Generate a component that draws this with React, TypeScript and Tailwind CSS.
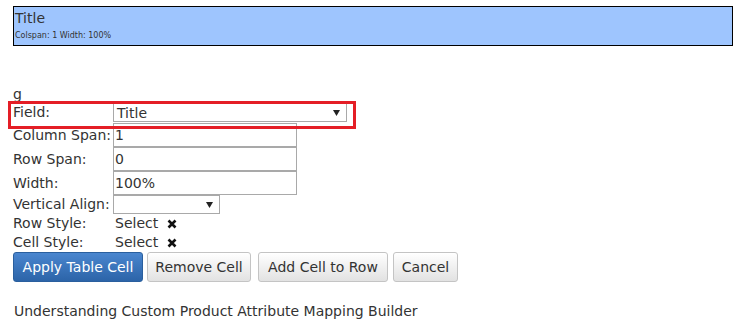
const font = { fontFamily: '"DejaVu Sans", Verdana, sans-serif' };

const Caret = () => (
  <svg width="7" height="6" viewBox="0 0 7 6" className="shrink-0">
    <path d="M0 0 L7 0 L3.5 6 Z" fill="#222" />
  </svg>
);

const Label = ({ children }: { children: React.ReactNode }) => (
  <div className="w-[100px] shrink-0 whitespace-nowrap">{children}</div>
);

const TextBox = ({ value }: { value: string }) => (
  <div className="w-[184px] h-[24px] border border-[#a9a9a9] bg-white px-[1px] flex items-center leading-none">
    {value}
  </div>
);

const XIcon = () => (
  <svg width="10" height="10" viewBox="0 0 10 10" className="ml-[9px]">
    <path d="M1.5 1.5 L8.5 8.5 M8.5 1.5 L1.5 8.5" stroke="#111" strokeWidth="2.6" strokeLinecap="butt" />
  </svg>
);

const GreyButton = ({ children, className }: { children: React.ReactNode; className: string }) => (
  <button
    className={`h-[30px] shrink-0 whitespace-nowrap rounded-[3px] border border-[#c4c4c4] bg-gradient-to-b from-white to-[#e2e2e2] text-[#333] shadow-[inset_0_1px_0_rgba(255,255,255,0.8)] ${className}`}
  >
    {children}
  </button>
);

export default function App() {
  return (
    <div className="w-[743px] h-[326px] bg-white text-[14px] text-[#333] overflow-hidden" style={font}>
      {/* cell preview */}
      <div className="ml-[13px] mt-[6px] w-[720px] h-[40px] border border-black bg-[#9ec5fe] pl-[1px]">
        <div className="text-[14px] leading-[20px] pt-[1px]">Title</div>
        <div className="text-[8px] leading-[12px] mt-[2px]">Colspan: 1 Width: 100%</div>
      </div>

      <div className="ml-[13px] mt-[40px] leading-[16px] h-[16px]">g</div>

      <div className="relative">
        {/* highlight */}
        <div className="absolute left-[8px] top-[-1px] w-[348px] h-[28px] border-[3px] border-[#e41e26] pointer-events-none" />

        <div className="pl-[13px] flex items-center h-[21px]">
          <Label>Field:</Label>
          <div className="w-[234px] h-[19px] border border-[#a9a9a9] bg-white flex items-center justify-between pl-[3px] pr-[6px] leading-none">
            <span>Title</span>
            <Caret />
          </div>
        </div>

        <div className="pl-[13px] flex items-center h-[24px]">
          <Label>Column Span:</Label>
          <TextBox value="1" />
        </div>
        <div className="pl-[13px] flex items-center h-[24px]">
          <Label>Row Span:</Label>
          <TextBox value="0" />
        </div>
        <div className="pl-[13px] flex items-center h-[24px]">
          <Label>Width:</Label>
          <TextBox value="100%" />
        </div>
        <div className="pl-[13px] flex items-center h-[19px]">
          <Label>Vertical Align:</Label>
          <div className="w-[107px] h-[19px] border border-[#a9a9a9] bg-white flex items-center justify-end pr-[6px]">
            <Caret />
          </div>
        </div>
        <div className="pl-[13px] flex items-center h-[19px]">
          <Label>Row Style:</Label>
          <span className="ml-[2px]">Select</span>
          <XIcon />
        </div>
        <div className="pl-[13px] flex items-center h-[19px]">
          <Label>Cell Style:</Label>
          <span className="ml-[2px]">Select</span>
          <XIcon />
        </div>

        <div className="pl-[13px] flex items-center">
          <button className="h-[30px] w-[130px] shrink-0 whitespace-nowrap rounded-[3px] border border-[#2a5f9e] bg-gradient-to-b from-[#4a86cf] to-[#2c64a8] text-white">
            Apply Table Cell
          </button>
          <GreyButton className="w-[104px] ml-[4px]">Remove Cell</GreyButton>
          <GreyButton className="w-[130px] ml-[7px]">Add Cell to Row</GreyButton>
          <GreyButton className="w-[65px] ml-[5px]">Cancel</GreyButton>
        </div>
      </div>

      <div className="ml-[14px] mt-[21px] leading-[16px]">Understanding Custom Product Attribute Mapping Builder</div>
    </div>
  );
}
